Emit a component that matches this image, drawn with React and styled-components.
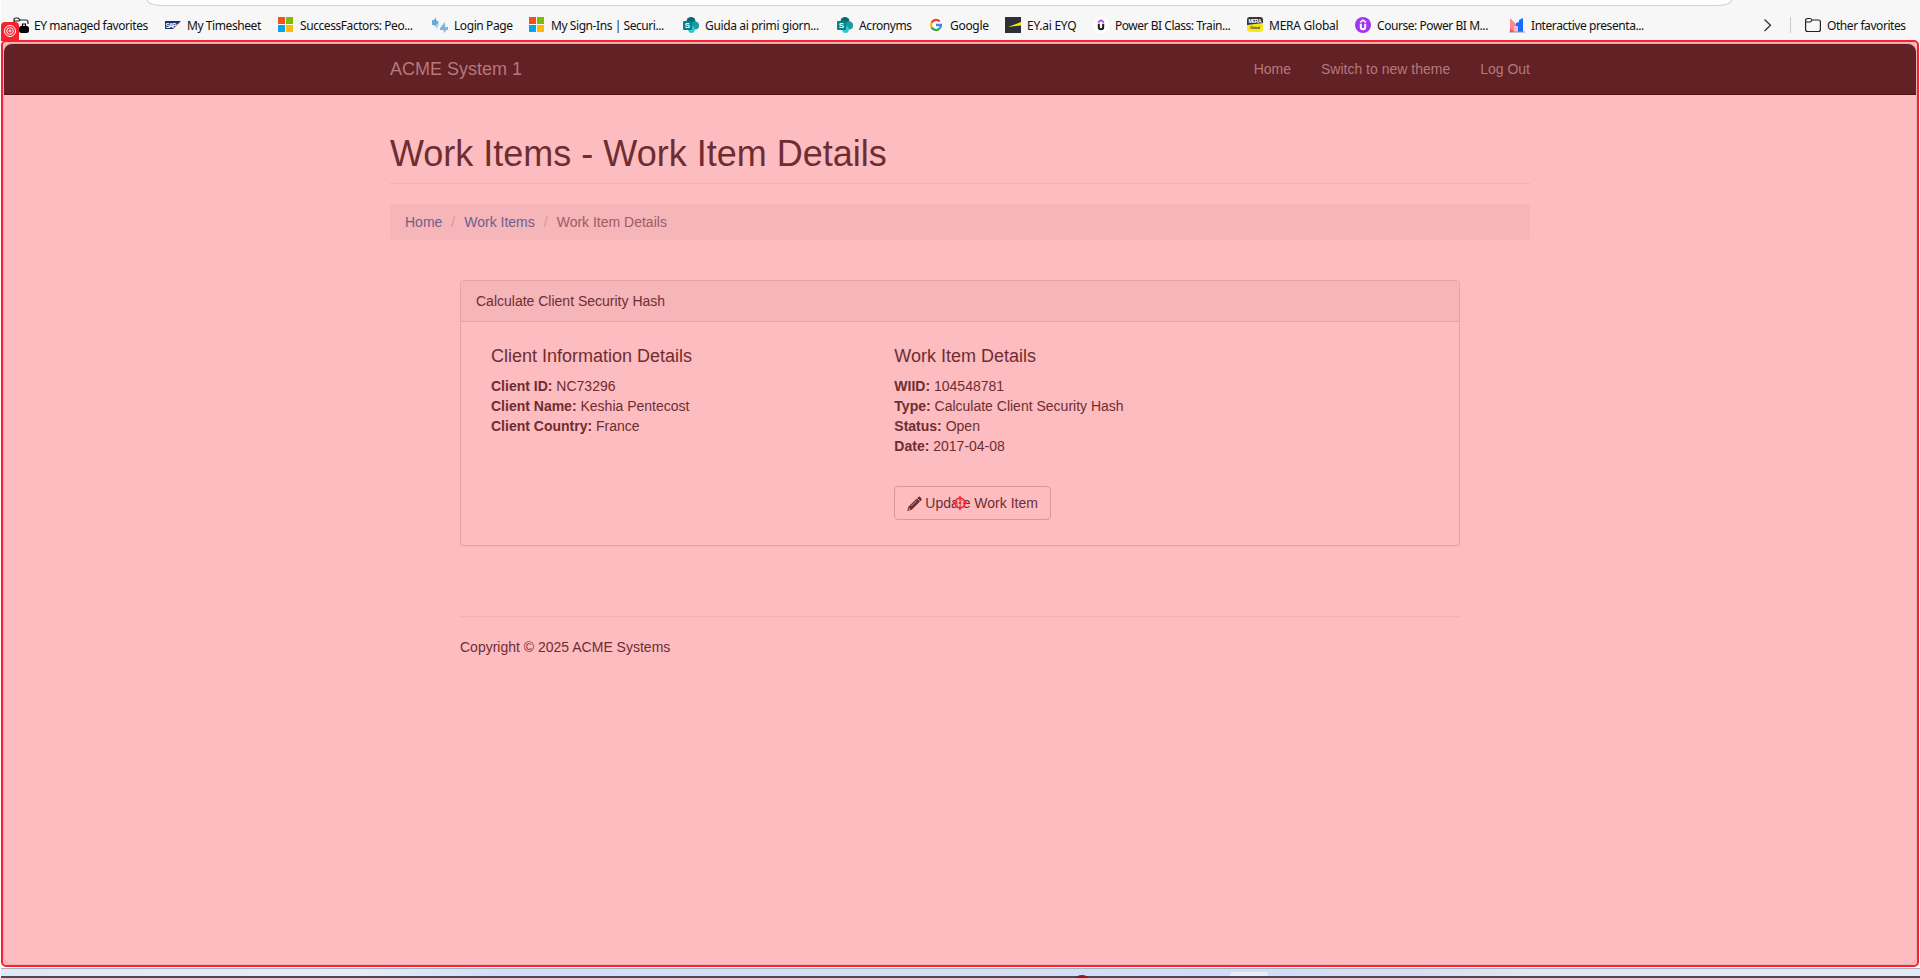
import React from "react";
import styled, { createGlobalStyle } from "styled-components";

const Global = createGlobalStyle`
  *, *::before, *::after { box-sizing: border-box; }
  body { margin: 0; background: #fff; overflow: hidden; }
`;

const Screen = styled.div`
  position: relative;
  width: 1920px;
  height: 978px;
  padding-left: 1px;
  display: flex;
  flex-direction: column;
  background: #fff;
  overflow: hidden;
`;

const Chrome = styled.header`
  height: 44px;
  flex: none;
  background: #f7f7f7;
  display: flex;
  flex-direction: column;
`;

const AddressBar = styled.div`
  height: 6px;
  width: 1585px;
  margin-left: 146px;
  border: 1px solid #cfcfcf;
  border-top: 0;
  border-radius: 0 0 14px 14px / 0 0 6px 6px;
  background: #fff;
`;

const Favorites = styled.nav`
  height: 40px;
  display: flex;
  align-items: center;
  font: 12px/16px "Noto Sans", "Open Sans", sans-serif;
  color: #111;
`;

const FavoriteList = styled.div`
  display: flex;
  margin-left: 12px;
`;

const Favorite = styled.div`
  flex: none;
  width: ${(p) => p.$width}px;
  display: flex;
  align-items: center;
  gap: ${(p) => p.$gap ?? 6}px;
  svg { flex: none; width: 16px; height: 16px; }
`;

const FavoriteLabel = styled.span`
  white-space: nowrap;
  letter-spacing: ${(p) => p.$tracking ?? -0.43}px;
  padding-top: 2px;
`;

const Divider = styled.span`
  width: 1px;
  height: 16px;
  margin-right: 14px;
  background: #c9c9c9;
`;

const Viewport = styled.div`
  flex: none;
  width: 1912px;
  height: 920px;
  margin-left: 3px;
  border-radius: 8px;
  overflow: hidden;
  background: #fff;
  box-shadow: 0 0 2px rgba(0, 0, 0, 0.3);
  color: #333;
  font: 14px/20px "Liberation Sans", Arial, sans-serif;
`;

const Navbar = styled.div`
  height: 51px;
  background: #222;
  border-bottom: 1px solid #080808;
`;

const Container = styled.div`
  width: 1140px;
  margin: 0 auto;
`;

const NavRow = styled(Container)`
  height: 50px;
  display: flex;
  align-items: center;
  color: #9d9d9d;
`;

const Brand = styled.span`
  font-size: 18px;
  margin-right: auto;
`;

const NavLink = styled.a`
  margin-left: 30px;
`;

const PageTitle = styled.h1`
  margin: 39px 0 20px;
  height: 50px;
  font-size: 36px;
  font-weight: 400;
  line-height: 40px;
  border-bottom: 1px solid #eee;
`;

const Breadcrumb = styled.ol`
  margin: 0;
  padding: 8px 15px;
  height: 36px;
  list-style: none;
  display: flex;
  background: #f5f5f5;
  border-radius: 4px;
`;

const Crumb = styled.li`
  color: ${(p) => (p.$link ? "#337ab7" : "#777")};
  &:not(:first-child)::before {
    content: "/";
    padding: 0 9px;
    color: #ccc;
  }
`;

const Body = styled.div`
  width: 1000px;
  margin: 0 auto;
`;

const Panel = styled.section`
  margin-top: 40px;
  height: 266px;
  border: 1px solid #ddd;
  border-radius: 4px;
  box-shadow: 0 1px 1px rgba(0, 0, 0, 0.05);
`;

const PanelHeading = styled.div`
  height: 41px;
  padding: 10px 15px;
  background: #f5f5f5;
  border-bottom: 1px solid #ddd;
  border-radius: 3px 3px 0 0;
`;

const PanelBody = styled.div`
  display: grid;
  grid-template-columns: 403.33px 1fr;
  padding: 24px 30px;
`;

const Subtitle = styled.h4`
  margin: 0 0 10px;
  font-size: 18px;
  font-weight: 400;
  line-height: 20px;
`;

const Button = styled.button`
  margin-top: 30px;
  width: 157px;
  height: 34px;
  padding: 0 0 0 12px;
  display: flex;
  align-items: center;
  gap: 3px;
  border: 1px solid #ccc;
  border-radius: 4px;
  background: #fff;
  color: #333;
  font: inherit;
  white-space: nowrap;
`;

const Footer = styled.footer`
  margin-top: 70px;
  padding-top: 20px;
  border-top: 1px solid #eee;
`;

const Taskbar = styled.div`
  margin-top: 4px;
  height: 10px;
  display: flex;
  justify-content: flex-start;
  border-top: 1px solid #a9b0c0;
  border-bottom: 2px solid #484c58;
  background: linear-gradient(90deg, #dfe9f6 0%, #e5eff9 18%, #d0e0fa 26%, #d5e0f5 52%, #d0defa 65%, #d9dff2 74%, #dfe9f6 80%, #e1ebf7 100%);
`;

const TaskDot = styled.span`
  width: 12px;
  height: 3px;
  margin: 6px 142px 0 1075px;
  border-radius: 6px 6px 0 0 / 3px 3px 0 0;
  background: #961618;
`;

const TaskTab = styled.span`
  width: 38px;
  height: 4px;
  margin-top: 3px;
  border-radius: 3px 3px 0 0;
  background: #e9effb;
`;

const Highlight = styled.div`
  position: absolute;
  left: 1px;
  top: 40px;
  width: 1918px;
  height: 927px;
  border: 2px solid #f8222f;
  border-radius: 5px;
  background: rgba(246, 34, 46, 0.3);
  background-clip: padding-box;
`;

const TargetBadge = styled.div`
  position: absolute;
  left: 1px;
  top: 22px;
  width: 18px;
  height: 19px;
  border-radius: 4px 4px 0 0;
  background: #f8222f;
  svg { display: block; margin: 3px; }
`;

const Crosshair = styled.svg`
  position: absolute;
  left: 953px;
  top: 496px;
`;

const ManagedIcon = () => (
  <svg viewBox="0 0 16 16" fill="none" stroke="#222" strokeWidth="1.200">
    <path d="M1 11V3q0-2 2-2h2l2 2h6q2 0 2 2v2M2 13h5M1 4h5l1.500-1.200" />
    <rect x="6" y="9" width="10" height="7" rx="2.500" fill="#000" stroke="none" />
    <path d="M9.500 9V7h3v2" stroke="#000" />
  </svg>
);

const SapIcon = () => (
  <svg viewBox="0 0 16 16">
    <path d="M0 4h16l-8 8H0z" fill="#1b2f72" />
    <text x="0.500" y="10.500" fontSize="6.500" fontWeight="700" fill="#fff" fontFamily="Liberation Sans" textLength="11">SAP</text>
  </svg>
);

const MicrosoftIcon = () => (
  <svg viewBox="0 0 16 16" shapeRendering="crispEdges">
    <path fill="#f35022" d="M0 0h7v7H0z" />
    <path fill="#80bb03" d="M8 0h7v7H8z" />
    <path fill="#03a5f0" d="M0 8h7v7H0z" />
    <path fill="#ffba08" d="M8 8h7v7H8z" />
  </svg>
);

const LoginIcon = () => (
  <svg viewBox="0 0 16 16">
    <path fill="#67a9d8" d="M0 3h2l2-3v3l3 2-3 5-2-2H0z" />
    <path fill="#b4d5ec" d="M3 9l4-4v3L5 12z" />
    <path fill="#7db5dc" d="M8 11l5-6v5h3v3h-2l-1 3-2-3H8z" />
  </svg>
);

const SharePointIcon = () => (
  <svg viewBox="0 0 16 16">
    <circle cx="8" cy="4.500" r="4.500" fill="#036c70" />
    <circle cx="12" cy="8.500" r="4" fill="#1a9ba1" />
    <circle cx="8.500" cy="12.500" r="3.400" fill="#37c6d0" />
    <rect y="4" width="9" height="9" rx="1" fill="#038387" />
    <text x="4.500" y="11.300" fontSize="8" fontWeight="700" fill="#fff" textAnchor="middle" fontFamily="Liberation Sans">S</text>
  </svg>
);

const GoogleIcon = () => (
  <svg viewBox="0 0 16 16" fill="none" strokeWidth="2.300">
    <circle cx="8" cy="8" r="8" fill="#fff" />
    <path stroke="#ea4335" d="M3.600 5.600A5 5 0 0 1 11.700 4.600" />
    <path stroke="#fbbc05" d="M3.600 5.600a5 5 0 0 0 0 4.800" />
    <path stroke="#34a853" d="M3.600 10.400A5 5 0 0 0 11.400 11.700" />
    <path stroke="#4285f4" d="M11.400 11.700A5 5 0 0 0 13 8H8" />
  </svg>
);

const EyIcon = () => (
  <svg viewBox="0 0 16 16">
    <path fill="#2e2e38" d="M0 0h16v16H0z" />
    <path fill="#ffe600" d="M3 10l13-5v3.500z" />
  </svg>
);

const UdemyIcon = ({ purple }) => (
  <svg viewBox="0 0 16 16" fill="none">
    <circle cx="8" cy="8" r="8" fill={purple ? "#a435f0" : "#fff"} />
    <path stroke={purple ? "#fff" : "#a435f0"} strokeWidth="1.500" d="M5 5.300L8 3.200l3 2.100" />
    <path stroke={purple ? "#fff" : "#1c1d1f"} strokeWidth="2" d="M5.800 6.800V10q0 2.300 2.200 2.300T10.200 10V6.800" />
  </svg>
);

const MeraIcon = () => (
  <svg viewBox="0 0 16 16">
    <rect width="16" height="15" rx="3" fill="#f8e71c" />
    <path fill="#34343c" d="M0 8V3q0-3 3-3h10q3 0 3 3v3z" />
    <text x="1.500" y="5.700" fontSize="5" fontWeight="700" fill="#fff" fontFamily="Liberation Sans" textLength="13">MERA</text>
    <text x="3" y="11.600" fontSize="3.500" fontWeight="700" fill="#333" fontFamily="Liberation Sans" textLength="10">Global</text>
  </svg>
);

const MentiIcon = () => (
  <svg viewBox="0 0 16 16">
    <path fill="#ff8795" d="M1 1l6 6v8H1z" />
    <path fill="#ff4b45" d="M1 11l4 4H1z" />
    <path fill="#ffb9c0" d="M5 9h4v6H5z" />
    <path fill="#196cff" d="M7 6l3-1V3l4-2v14H9V9H7z" />
    <path stroke="#8795a8" d="M0 15h16" />
  </svg>
);

const ChevronIcon = () => (
  <svg viewBox="0 0 16 16" fill="none" stroke="#333" strokeWidth="1.300">
    <path d="M5.500 2.500L11.500 8.200 5.500 14" />
  </svg>
);

const FolderIcon = () => (
  <svg viewBox="0 0 16 16" fill="none" stroke="#222" strokeWidth="1.200">
    <path d="M0.600 12.500v-9q0-2 2-2H5q1 0 2 1.500h6.400q2 0 2 2v7.500q0 2-2 2H2.600q-2 0-2-2zM0.600 5H5q1 0 2-2" />
  </svg>
);

const PencilIcon = () => (
  <svg width="15" height="15" viewBox="0 0 14 14.500" fill="currentColor">
    <path d="M9.700 2l1-1q.9-.8 1.800 0L13.600 2.200q.8.900 0 1.800l-1 1z" />
    <path fillRule="evenodd" d="M9.200 2.300L12.300 5.400 4.300 13.400 0 14.500 1.100 10.300zM8.900 4.300L3.600 9.600l.4.400L9.300 4.700zM1.700 11.500l-.5 1.900 1.900-.5z" />
  </svg>
);

const favorites = [
  { label: "EY managed favorites", icon: <ManagedIcon />, width: 152, gap: 5 },
  { label: "My Timesheet", icon: <SapIcon />, width: 113, tracking: -0.42 },
  { label: "SuccessFactors: Peo...", icon: <MicrosoftIcon />, width: 154 },
  { label: "Login Page", icon: <LoginIcon />, width: 97, tracking: -0.42 },
  { label: "My Sign-Ins | Securi...", icon: <MicrosoftIcon />, width: 154 },
  { label: "Guida ai primi giorn...", icon: <SharePointIcon />, width: 154, tracking: -0.36 },
  { label: "Acronyms", icon: <SharePointIcon />, width: 91, tracking: -0.4 },
  { label: "Google", icon: <GoogleIcon />, width: 77, tracking: -0.3 },
  { label: "EY.ai EYQ", icon: <EyIcon />, width: 88, tracking: -0.25 },
  { label: "Power BI Class: Train...", icon: <UdemyIcon />, width: 154, tracking: -0.47 },
  { label: "MERA Global", icon: <MeraIcon />, width: 108, tracking: -0.25 },
  { label: "Course: Power BI M...", icon: <UdemyIcon purple />, width: 154, tracking: -0.44 },
  { label: "Interactive presenta...", icon: <MentiIcon />, width: 250 },
];

export default function App() {
  return (
    <Screen>
      <Global />
      <Chrome>
        <AddressBar />
        <Favorites>
          <FavoriteList>
            {favorites.map((f) => (
              <Favorite key={f.label} $width={f.width} $gap={f.gap}>
                {f.icon}
                <FavoriteLabel $tracking={f.tracking}>{f.label}</FavoriteLabel>
              </Favorite>
            ))}
          </FavoriteList>
          <Favorite $width={31}><ChevronIcon /></Favorite>
          <Divider />
          <Favorite $width={110}>
            <FolderIcon />
            <FavoriteLabel>Other favorites</FavoriteLabel>
          </Favorite>
        </Favorites>
      </Chrome>
      <Viewport>
        <Navbar>
          <NavRow>
            <Brand>ACME System 1</Brand>
            <NavLink>Home</NavLink>
            <NavLink>Switch to new theme</NavLink>
            <NavLink>Log Out</NavLink>
          </NavRow>
        </Navbar>
        <Container>
          <PageTitle>Work Items - Work Item Details</PageTitle>
          <Breadcrumb>
            <Crumb $link>Home</Crumb>
            <Crumb $link>Work Items</Crumb>
            <Crumb>Work Item Details</Crumb>
          </Breadcrumb>
        </Container>
        <Body>
          <Panel>
            <PanelHeading>Calculate Client Security Hash</PanelHeading>
            <PanelBody>
              <div>
                <Subtitle>Client Information Details</Subtitle>
                <div><b>Client ID:</b> NC73296</div>
                <div><b>Client Name:</b> Keshia Pentecost</div>
                <div><b>Client Country:</b> France</div>
              </div>
              <div>
                <Subtitle>Work Item Details</Subtitle>
                <div><b>WIID:</b> 104548781</div>
                <div><b>Type:</b> Calculate Client Security Hash</div>
                <div><b>Status:</b> Open</div>
                <div><b>Date:</b> 2017-04-08</div>
                <Button><PencilIcon />Update Work Item</Button>
              </div>
            </PanelBody>
          </Panel>
          <Footer>Copyright © 2025 ACME Systems</Footer>
        </Body>
      </Viewport>
      <Taskbar><TaskDot /><TaskTab /></Taskbar>
      <Highlight />
      <TargetBadge>
        <svg width="12" height="12" viewBox="0 0 12 12" fill="none" stroke="#fff">
          <circle cx="6" cy="6" r="5.500" />
          <circle cx="6" cy="6" r="3.300" />
          <circle cx="6" cy="6" r="1" />
        </svg>
      </TargetBadge>
      <Crosshair width="14" height="14" viewBox="0 0 14 14" fill="none" stroke="#f8222f" strokeWidth="1.500">
        <circle cx="7" cy="7" r="5" fill="#fcbcc0" fillOpacity="0.500" />
        <path d="M7 0v4M7 10v4M0 7h4M10 7h4" />
        <circle cx="7" cy="7" r="1.300" fill="#f8222f" stroke="none" />
      </Crosshair>
    </Screen>
  );
}
